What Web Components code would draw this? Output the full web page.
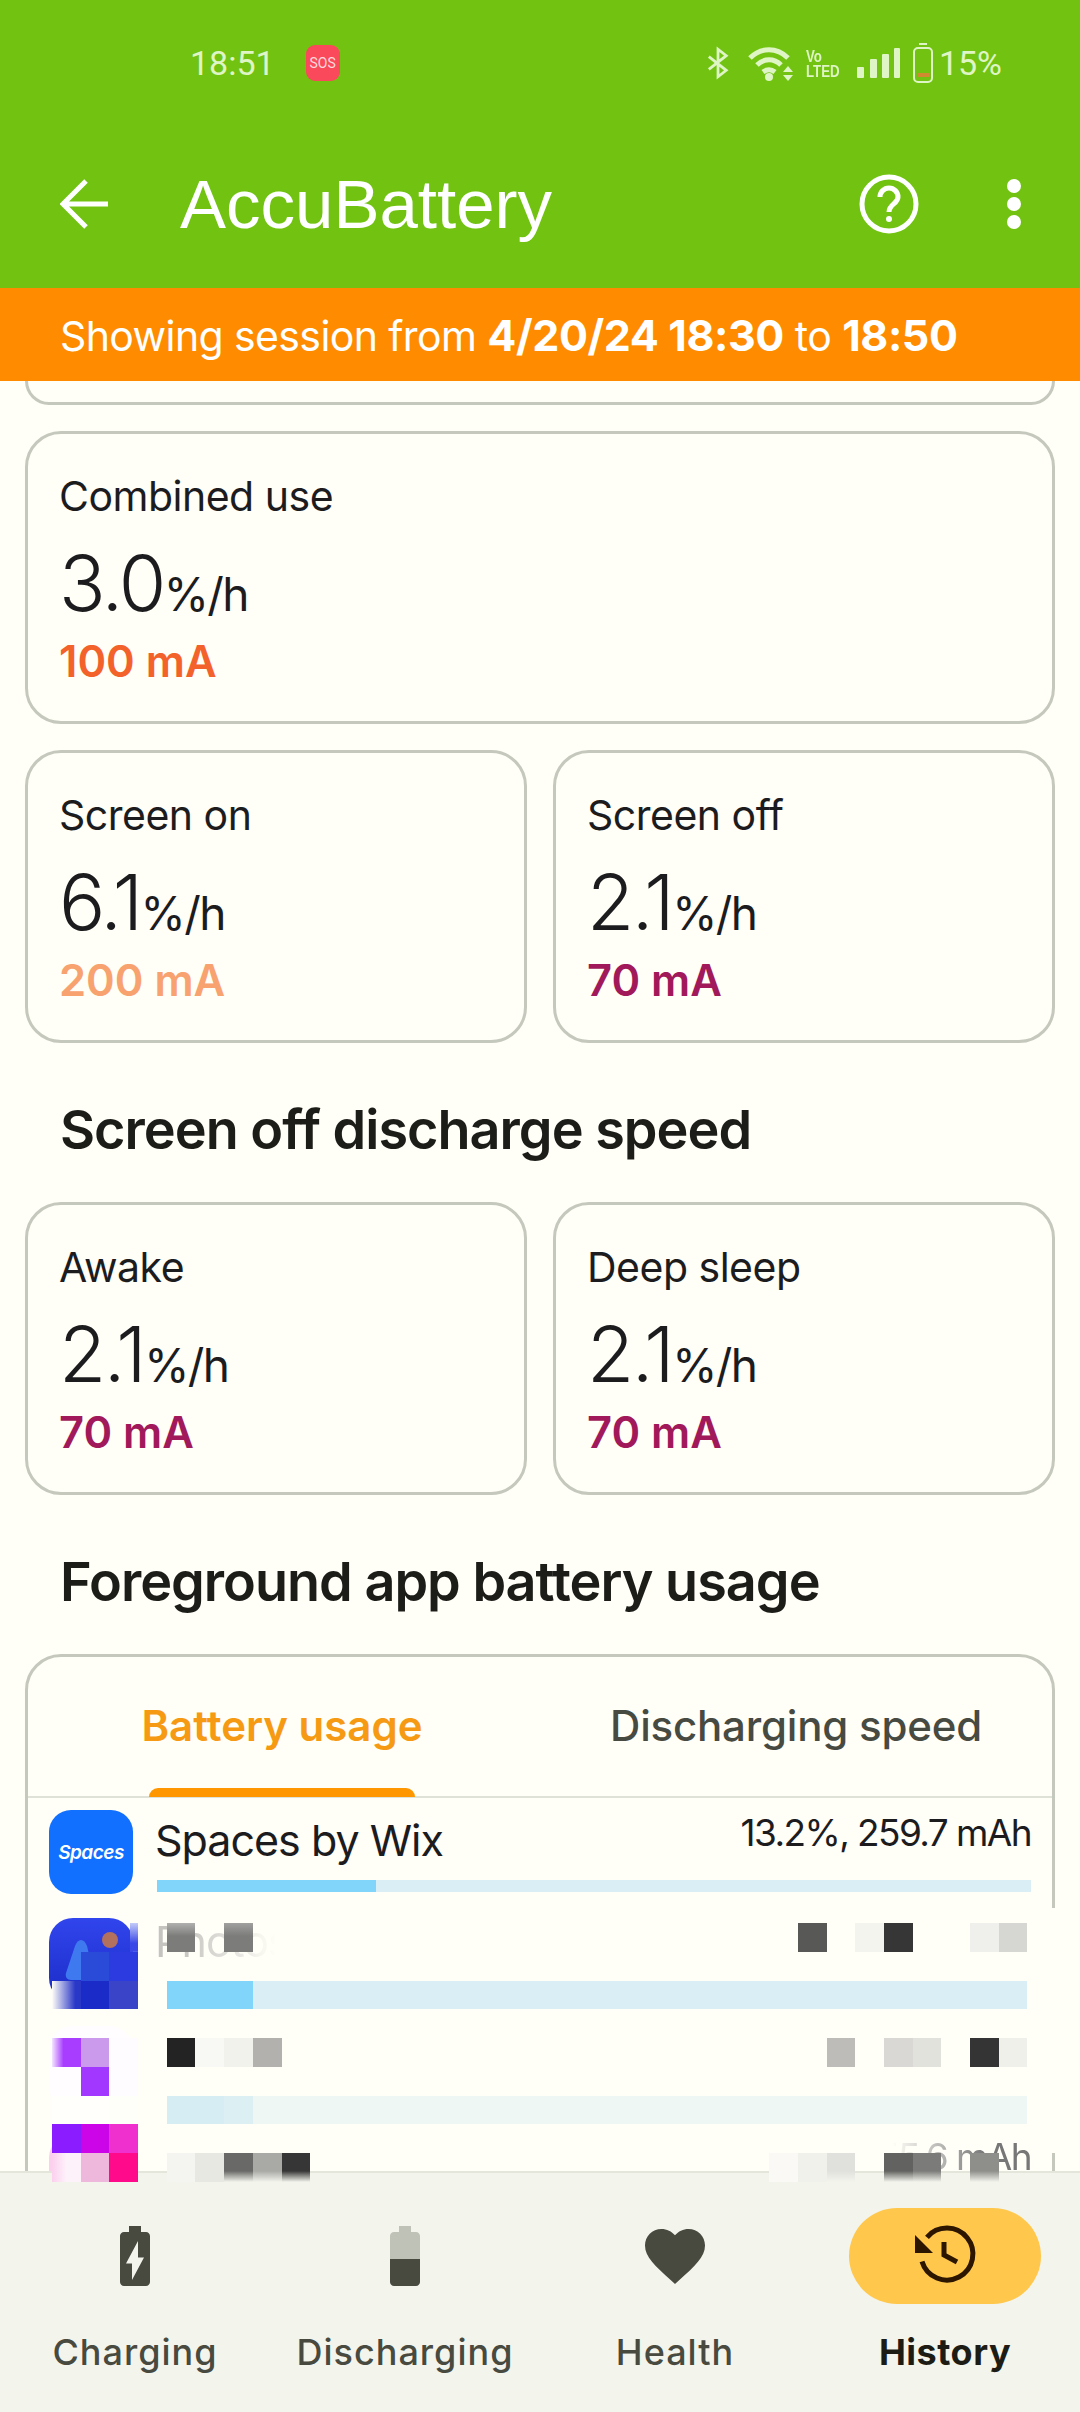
<!DOCTYPE html>
<html lang="en">
<head>
<meta charset="utf-8">
<title>AccuBattery</title>
<style>
	html, body {
		margin: 0;
		padding: 0;
		background: #fffef7;
	}
	body {
		color: #1c1c1e;
		display: flex;
		flex-direction: column;
		font-family: Inter, "Liberation Sans", sans-serif;
		height: 2412px;
		overflow: hidden;
		position: relative;
		width: 1080px;
	}
</style>
</head>
<body>
<app-header></app-header>
<session-banner>Showing session from <b>4/20/24 18:30</b> to <b>18:50</b></session-banner>
<stats-scroll>
	<card-stub></card-stub>
	<stat-card value="3.0" current="100 mA" tone="#f4622c">Combined use</stat-card>
	<card-pair>
		<stat-card value="6.1" current="200 mA" tone="#f8a26f">Screen on</stat-card>
		<stat-card value="2.1" current="70 mA" tone="#a1195a">Screen off</stat-card>
	</card-pair>
	<section-title>Screen off discharge speed</section-title>
	<card-pair>
		<stat-card value="2.1" current="70 mA" tone="#a1195a">Awake</stat-card>
		<stat-card value="2.1" current="70 mA" tone="#a1195a">Deep sleep</stat-card>
	</card-pair>
	<section-title>Foreground app battery usage</section-title>
	<usage-card>
		<app-row detail="13.2%, 259.7 mAh" share="25">
			<svg slot="icon" width="84" height="84" viewBox="0 0 84 84"><rect width="84" height="84" rx="22" fill="#1170ff"/><text x="42" y="49" text-anchor="middle" fill="#fff" font-family="Inter, sans-serif" font-size="19" font-style="italic" font-weight="600" letter-spacing="-0.5">Spaces</text></svg>
			Spaces by Wix
		</app-row>
		<app-row faded bare>
			<svg slot="icon" width="84" height="84" viewBox="0 0 84 84">
				<defs><linearGradient id="blue" x1="0" y1="0" x2="0" y2="1"><stop offset="0" stop-color="#3145ee"/><stop offset="1" stop-color="#1a2bc4"/></linearGradient></defs>
				<rect width="84" height="84" rx="24" fill="url(#blue)"/>
				<circle cx="61" cy="22" r="8" fill="#b2705f"/>
				<path d="M26 28c3-8 9-8 12 0l8 34H22c-4 0-6-3-5-7z" fill="#3f79ef"/>
			</svg>
			Photos
		</app-row>
		<app-row bare>
			<svg slot="icon" width="84" height="84" viewBox="0 0 84 84"><rect width="84" height="84" rx="24" fill="#fffdff"/></svg>
		</app-row>
		<app-row detail="55.6 mAh" bare>
			<svg slot="icon" width="84" height="84" viewBox="0 0 84 84"><rect width="84" height="84" rx="24" fill="#fbd0ee"/></svg>
		</app-row>
	</usage-card>
</stats-scroll>
<bottom-nav>
	<nav-item label="Charging">
		<svg width="72" height="72" viewBox="0 0 24 24" fill="#484a40"><path d="M15.67 4H14V2h-4v2H8.33C7.6 4 7 4.6 7 5.33v15.33C7 21.4 7.6 22 8.33 22h7.33c.74 0 1.34-.6 1.34-1.33V5.33C17 4.6 16.4 4 15.67 4z"/><path d="M11 20v-5.5H9L13 7v5.5h2L11 20z" fill="#f3f4ec"/></svg>
	</nav-item>
	<nav-item label="Discharging">
		<svg width="72" height="72" viewBox="0 0 24 24"><path d="M15.67 4H14V2h-4v2H8.33C7.6 4 7 4.6 7 5.33V13h10V5.33C17 4.6 16.4 4 15.67 4z" fill="#bfc2b7"/><path d="M7 13v7.67C7 21.4 7.6 22 8.33 22h7.33c.74 0 1.34-.6 1.34-1.33V13H7z" fill="#484a40"/></svg>
	</nav-item>
	<nav-item label="Health">
		<svg width="72" height="72" viewBox="0 0 24 24" fill="#484a40"><path d="M12 21.35l-1.45-1.32C5.4 15.36 2 12.28 2 8.5 2 5.42 4.42 3 7.5 3c1.74 0 3.41.81 4.5 2.09C13.09 3.81 14.76 3 16.5 3 19.58 3 22 5.42 22 8.5c0 3.78-3.4 6.86-8.55 11.54L12 21.35z"/></svg>
	</nav-item>
	<nav-item label="History" active>
		<svg width="80" height="80" viewBox="0 0 80 80" fill="none" stroke="#2d1600" stroke-width="5"><path d="M22 21.3A26 26 0 1 1 17 45.5"/><path d="M39 26V39L52 46"/><path d="M10 19V37H28z" fill="#2d1600" stroke="none"/></svg>
	</nav-item>
</bottom-nav>
<pixel-mosaic></pixel-mosaic>

<script>
/* global HTMLElement */

const define = (name, markup, extra) => {
	const template = document.createElement('template');
	template.innerHTML = markup;
	class Simple extends HTMLElement {
		constructor() {
			super();
			this.attachShadow({ mode: 'open' }).appendChild(template.content.cloneNode(true));
			if (extra) {
				extra(this);
			}
		}
	}
	window.customElements.define(name, Simple);
};

define('status-bar', `
	<style>
	:host {
		align-items: center;
		color: #dff5c6;
		display: flex;
		font-family: Roboto, sans-serif;
		font-size: 34px;
		height: 62px;
		padding: 0 78px 0 190px;
		position: relative;
	}
	.sos {
		align-items: center;
		background: #f9495a;
		border-radius: 9px;
		color: #ffd9dc;
		display: flex;
		font-size: 14px;
		height: 36px;
		justify-content: center;
		margin-left: 31px;
		width: 34px;
	}
	.right {
		align-items: center;
		display: flex;
		margin-left: auto;
	}
	svg {
		display: block;
		flex: none;
	}
	.volte {
		font-family: "Liberation Sans", sans-serif;
		font-size: 17px;
		font-weight: 700;
		line-height: 15px;
		margin: 2px 15px 0 12px;
		transform: scaleX(0.78);
		transform-origin: left;
		width: 36px;
	}
	.pct {
		margin-left: 6px;
	}
	</style>
	<span>18:51</span>
	<span class="sos">SOS</span>
	<span class="right">
		<svg width="22" height="34" viewBox="0 0 24 34" fill="none" stroke="currentColor" stroke-width="3"><path d="M2 10l19 15-9 7V2l9 7L2 24"/></svg>
		<svg style="margin-left:19px" width="46" height="36" viewBox="0 0 46 36" fill="none" stroke="currentColor" stroke-width="5"><path d="M2 13c11-11 27-11 38 0M9 20c7-7 17-7 24 0M15 27c4-3 8-3 12 0"/><circle cx="21" cy="32" r="4" fill="currentColor" stroke="none"/><path d="M35 27l5-6 5 6zM35 30l5 6 5-6z" fill="currentColor" stroke="none"/></svg>
		<span class="volte"><div>Vo</div><div>LTED</div></span>
		<svg width="44" height="32" viewBox="0 0 44 32" fill="currentColor"><rect x="0" y="20" width="7" height="11" rx="1"/><rect x="13" y="12" width="7" height="19" rx="1"/><rect x="25" y="7" width="7" height="24" rx="1"/><rect x="37" y="1" width="6" height="30" rx="1"/></svg>
		<svg style="margin-left:12px" width="20" height="40" viewBox="0 0 20 40" fill="none" stroke="currentColor" stroke-width="2"><path d="M6 1h8"/><rect x="1" y="5" width="18" height="34" rx="4"/><rect x="4" y="30" width="12" height="4" fill="#d08a30" stroke="none"/></svg>
		<span class="pct">15%</span>
	</span>
`);

define('app-header', `
	<style>
	:host {
		background: #72c311;
		display: block;
		flex: none;
		height: 288px;
		padding-top: 32px;
		box-sizing: border-box;
	}
	.bar {
		align-items: center;
		color: #fff;
		display: flex;
		height: 76px;
		margin-top: 72px;
		padding: 0 59px 0 60px;
	}
	h1 {
		flex: 1;
		font-family: "Liberation Sans", sans-serif;
		font-size: 69px;
		font-weight: 400;
		margin: 0 0 0 72px;
	}
	svg {
		display: block;
		flex: none;
	}
	</style>
	<status-bar></status-bar>
	<div class="bar">
		<svg width="48" height="50" viewBox="0 0 48 50" fill="none" stroke="#fff" stroke-width="5"><path d="M48 25H4M26 2L3 25l23 23"/></svg>
		<h1>AccuBattery</h1>
		<svg width="62" height="62" viewBox="0 0 62 62" fill="none" stroke="#fff" stroke-width="5"><circle cx="31" cy="31" r="27"/><path d="M22 24c0-5 4-9 9-9s9 4 9 9c0 7-9 7-9 15"/><circle cx="31" cy="46" r="3" fill="#fff" stroke="none"/></svg>
		<svg style="margin-left:87px" width="14" height="52" viewBox="0 0 14 52" fill="#fff"><circle cx="7" cy="8" r="7"/><circle cx="7" cy="26" r="7"/><circle cx="7" cy="44" r="7"/></svg>
	</div>
`);

define('session-banner', `
	<style>
	:host {
		align-items: center;
		background: #ff8c00;
		box-sizing: border-box;
		color: #fff;
		display: flex;
		flex: none;
		font-size: 41px;
		height: 93px;
		letter-spacing: -0.6px;
		padding-left: 60px;
		white-space: pre;
		z-index: 2;
	}
	.line ::slotted(b) {
		font-size: 43px;
		font-weight: 700;
		letter-spacing: -0.4px;
	}
	</style>
	<div class="line"><slot></slot></div>
`);

define('stats-scroll', `
	<style>
	:host {
		box-sizing: border-box;
		display: flex;
		flex: 1;
		flex-direction: column;
		gap: 26px;
		min-height: 0;
		overflow: hidden;
		padding: 0 25px;
	}
	</style>
	<slot></slot>
`);

define('card-stub', `
	<style>
	:host {
		border: solid #c5c8bc;
		border-radius: 0 0 36px 36px;
		border-width: 0 3px 3px;
		box-sizing: border-box;
		display: block;
		flex: none;
		height: 24px;
	}
	</style>
`);

define('card-pair', `
	<style>
	:host {
		display: grid;
		flex: none;
		gap: 26px;
		grid-template-columns: 1fr 1fr;
	}
	</style>
	<slot></slot>
`);

define('section-title', `
	<style>
	:host {
		display: flex;
		flex: none;
		align-items: center;
		box-sizing: border-box;
		color: #1c1c18;
		font-size: 54px;
		font-weight: 600;
		height: 107px;
		letter-spacing: -1px;
		padding: 14px 0 0 35px;
	}
	</style>
	<slot></slot>
`);

define('stat-card', `
	<style>
	:host {
		border: 3px solid #c5c8bc;
		border-radius: 36px;
		box-sizing: border-box;
		display: block;
		flex: none;
		height: 293px;
		padding: 37px 0 0 31px;
	}
	.label {
		font-size: 41px;
		height: 50px;
		letter-spacing: -0.5px;
		line-height: 50px;
	}
	.value {
		font-size: 77px;
		font-weight: 300;
		height: 92px;
		letter-spacing: -2.5px;
		line-height: 92px;
		margin-top: 16px;
	}
	.unit {
		font-size: 46px;
		font-weight: 400;
		letter-spacing: -1.6px;
	}
	.current {
		font-size: 43.5px;
		font-weight: 600;
		height: 50px;
		line-height: 50px;
		margin-top: 7px;
	}
	</style>
	<div class="label"><slot></slot></div>
	<div class="value"><span class="num"></span><span class="unit">%/h</span></div>
	<div class="current"></div>
`, (el) => {
	el.shadowRoot.querySelector('.num').textContent = el.getAttribute('value');
	const current = el.shadowRoot.querySelector('.current');
	current.textContent = el.getAttribute('current');
	current.style.color = el.getAttribute('tone');
});

define('usage-card', `
	<style>
	:host {
		border: 3px solid #c5c8bc;
		border-radius: 36px 36px 0 0;
		box-sizing: border-box;
		display: block;
		flex: none;
		position: relative;
	}
	.tabs {
		border-bottom: 2px solid #dfe2d6;
		display: grid;
		grid-template-columns: 1fr 1fr;
		height: 141px;
		box-sizing: border-box;
		position: relative;
	}
	.tab {
		align-items: center;
		color: #474a41;
		display: flex;
		font-size: 42px;
		font-weight: 500;
		justify-content: center;
		letter-spacing: -0.2px;
		padding-bottom: 2px;
	}
	.tab.on {
		color: #f59a12;
		font-weight: 600;
		letter-spacing: 0;
		padding-right: 4px;
	}
	.ind {
		background: #ff9800;
		border-radius: 9px 9px 0 0;
		bottom: -1px;
		height: 9px;
		left: 121px;
		position: absolute;
		width: 266px;
	}
	.rows {
		display: flex;
		flex-direction: column;
		gap: 24px;
		padding-top: 12px;
	}
	.gap {
		background: #fffef7;
		height: 245px;
		position: absolute;
		right: -3px;
		top: 251px;
		width: 6px;
	}
	</style>
	<div class="tabs">
		<div class="tab on">Battery usage</div>
		<div class="tab">Discharging speed</div>
		<div class="ind"></div>
	</div>
	<div class="rows"><slot></slot></div>
	<div class="gap"></div>
`);

define('app-row', `
	<style>
	:host {
		display: flex;
		height: 84px;
		padding: 0 21px;
		position: relative;
	}
	.icon {
		flex: none;
		height: 84px;
		width: 84px;
	}
	.main {
		display: flex;
		flex: 1;
		flex-direction: column;
		margin-left: 24px;
		min-width: 0;
	}
	.top {
		display: flex;
		font-size: 43px;
		height: 70px;
		justify-content: space-between;
		letter-spacing: -1px;
		line-height: 60px;
	}
	.name {
		margin-left: -2px;
	}
	.detail {
		font-size: 37px;
		letter-spacing: -1.6px;
		line-height: 46px;
	}
	.track {
		background: #daeef6;
		height: 12px;
	}
	.fill {
		background: #81d4fa;
		height: 12px;
	}
	:host([bare]) .track {
		visibility: hidden;
	}
	:host([bare]) .detail {
		color: #777;
		-webkit-mask-image: linear-gradient(90deg, transparent 10%, #000 70%);
		mask-image: linear-gradient(90deg, transparent 10%, #000 70%);
	}
	:host([faded]) .name {
		opacity: 0.25;
		transform: translateY(-7px);
		-webkit-mask-image: linear-gradient(90deg, #000 20%, transparent 90%);
		mask-image: linear-gradient(90deg, #000 20%, transparent 90%);
	}
	</style>
	<div class="icon"><slot name="icon"></slot></div>
	<div class="main">
		<div class="top"><span class="name"><slot></slot></span><span class="detail"></span></div>
		<div class="track"><div class="fill"></div></div>
	</div>
`, (el) => {
	el.shadowRoot.querySelector('.detail').textContent = el.getAttribute('detail') || '';
	el.shadowRoot.querySelector('.fill').style.width = (el.getAttribute('share') || 0) + '%';
});

define('bottom-nav', `
	<style>
	:host {
		background: #f3f4ec;
		border-top: 2px solid #e4e6dc;
		box-sizing: border-box;
		display: grid;
		flex: none;
		grid-template-columns: repeat(4, 1fr);
		height: 241px;
		z-index: 2;
	}
	</style>
	<slot></slot>
`);

define('nav-item', `
	<style>
	:host {
		align-items: center;
		color: #484a40;
		display: flex;
		flex-direction: column;
		font-size: 36px;
		font-weight: 500;
		letter-spacing: 1px;
		padding-top: 35px;
	}
	:host([active]) {
		color: #1c1c14;
		font-weight: 700;
		letter-spacing: 0.5px;
	}
	.pill {
		align-items: center;
		border-radius: 48px;
		display: flex;
		height: 96px;
		justify-content: center;
		width: 192px;
	}
	:host([active]) .pill {
		background: #ffc84c;
	}
	.label {
		height: 46px;
		line-height: 46px;
		margin-top: 25px;
	}
	</style>
	<div class="pill"><slot></slot></div>
	<div class="label"></div>
`, (el) => {
	el.shadowRoot.querySelector('.label').textContent = el.getAttribute('label');
});

// [column, row, colour], grid starts at 52,1923 with cells of 28.7px
const fadeOut = (colour) => `linear-gradient(${colour} 62%, #f3f4ec 100%)`;
const cells = [
	[2, 0, 'linear-gradient(#c4ccf8, #3a48e8 70%) right / 28% 100% no-repeat'],
	[4, 0, 'linear-gradient(#b0b0ae, #7c7c7a 45%)'], [6, 0, 'linear-gradient(#a0a09e, #7c7c7a 45%)'],
	[26, 0, '#585856'], [28, 0, '#f4f4ef'], [29, 0, '#363636'], [32, 0, '#efefeb'], [33, 0, '#d6d7d2'],
	[1, 1, '#2a4bd8'], [2, 1, '#2b3be0'],
	[0, 2, 'linear-gradient(90deg, #fffef7, #2a38c8 80%)'], [1, 2, '#1a2bc8'], [2, 2, '#3a44c8'],
	[0, 4, 'linear-gradient(90deg, #f3e6ff, #a83cff 40%)'], [1, 4, '#cb9aec'], [2, 4, '#fffcff'],
	[4, 4, '#232324'], [5, 4, '#f8f8f4'], [6, 4, '#f2f2ed'], [7, 4, '#b2b1ad'],
	[27, 4, '#bdbcb8'], [29, 4, '#d9d8d4'], [30, 4, '#e2e2dc'], [32, 4, '#343434'], [33, 4, '#f0f0ea'],
	[0, 5, '#fffdff'], [1, 5, '#a238ff'], [2, 5, '#fffcff'],
	[0, 6, '#fffffb'], [1, 6, '#fffffb'], [2, 6, '#fffffa'],
	[0, 7, '#8a1cff'], [1, 7, '#cc05e8'], [2, 7, '#ef30cf'],
	[0, 8, 'linear-gradient(90deg, #fbd0ee, #fdf2fa 50%)'], [1, 8, '#eeb8dc'], [2, 8, '#ff0a8a'],
	[4, 8, '#f4f4f0'], [5, 8, '#e8e8e3'], [6, 8, fadeOut('#696968')], [7, 8, fadeOut('#a9a9a6')], [8, 8, fadeOut('#363636')],
	[25, 8, '#faf9f5'], [26, 8, '#f1f1ec'], [27, 8, fadeOut('#e0e1dc')],
	[29, 8, fadeOut('#626260')], [30, 8, fadeOut('#7b7b79')], [32, 8, fadeOut('#8e8e8b')],
];
for (let col = 4; col < 34; col++) {
	cells.push([col, 2, col < 7 ? '#81d4fa' : '#daeef6']);
	cells.push([col, 6, col < 6 ? '#d6eef3' : col === 6 ? '#dceff3' : '#eff7f5']);
}

define('pixel-mosaic', `
	<style>
	:host {
		display: grid;
		grid-template-columns: repeat(34, 28.7px);
		grid-template-rows: repeat(9, 28.78px);
		left: 52px;
		pointer-events: none;
		position: absolute;
		top: 1923px;
		z-index: 3;
	}
	</style>
`, (el) => {
	cells.forEach(([col, row, colour]) => {
		const cell = document.createElement('div');
		cell.style.gridColumn = col + 1;
		cell.style.gridRow = row + 1;
		cell.style.background = colour;
		el.shadowRoot.appendChild(cell);
	});
});
</script>
</body>
</html>
